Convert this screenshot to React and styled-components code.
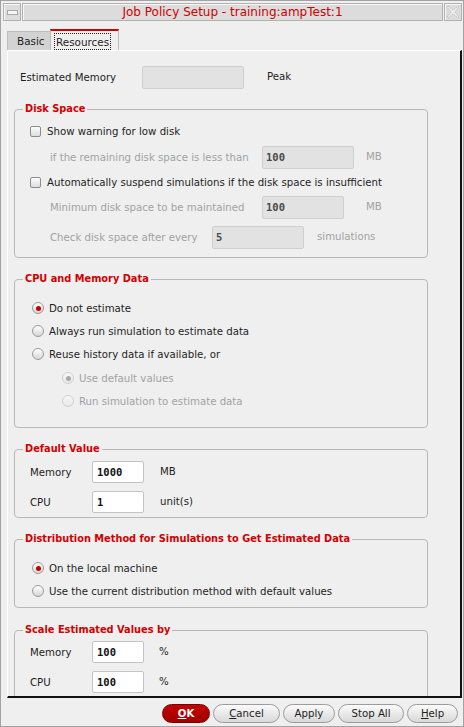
import React from "react";
import styled, { createGlobalStyle } from "styled-components";

const GlobalStyle = createGlobalStyle`
  body {
    margin: 0;
    background: #efefef;
    font-family: "DejaVu Sans", sans-serif;
  }
`;

function App() {
  return (
    <>
      <GlobalStyle />
      <Window>
        <TitleBar>
          <WinButton>
            <MinGlyph />
          </WinButton>
          <Title>Job Policy Setup - training:ampTest:1</Title>
          <WinButton>
            <svg width="14" height="14" viewBox="0 0 14 14">
              <path
                d="M2 1 L7 5 L12 1 L13 2 L9 7 L13 12 L12 13 L7 9 L2 13 L1 12 L5 7 L1 2 Z"
                fill="#ececec"
                stroke="#bdbdbd"
                strokeWidth="1"
                strokeDasharray="1.5 1"
              />
            </svg>
          </WinButton>
        </TitleBar>

        <Tabs>
          <Tab>Basic</Tab>
          <Tab $active>
            <Focus>Resources</Focus>
          </Tab>
        </Tabs>

        <Panel>
          <EstRow>
            <Label $w={122}>Estimated Memory</Label>
            <Field $w={102} $h={23} $off />
            <Unit $ml={23}>Peak</Unit>
          </EstRow>

          <Group $mt={13} $pb={8}>
            <Legend>Disk Space</Legend>
            <Row $mt={3} $pl={15}>
              <Check />
              <Text $ml={6}>Show warning for low disk</Text>
            </Row>
            <Row $mt={2} $pl={35}>
              <Label $w={212} $off>if the remaining disk space is less than</Label>
              <Field $w={92} $h={23} $off>100</Field>
              <Unit $ml={12} $off>MB</Unit>
            </Row>
            <Row $mt={1} $pl={15}>
              <Check />
              <Text $ml={6}>Automatically suspend simulations if the disk space is insufficient</Text>
            </Row>
            <Row $mt={1} $pl={35}>
              <Label $w={212} $off>Minimum disk space to be maintained</Label>
              <Field $w={82} $h={23} $off>100</Field>
              <Unit $ml={22} $off>MB</Unit>
            </Row>
            <Row $mt={6} $pl={35}>
              <Label $w={162} $off>Check disk space after every</Label>
              <Field $w={92} $h={23} $off>5</Field>
              <Unit $ml={13} $off>simulations</Unit>
            </Row>
          </Group>

          <Group $mt={14} $pb={15}>
            <Legend>CPU and Memory Data</Legend>
            <Row $mt={11} $h={22} $pl={17}>
              <Radio $on />
              <Text $ml={5}>Do not estimate</Text>
            </Row>
            <Row $mt={1} $h={22} $pl={17}>
              <Radio />
              <Text $ml={5}>Always run simulation to estimate data</Text>
            </Row>
            <Row $mt={1} $h={22} $pl={17}>
              <Radio />
              <Text $ml={5}>Reuse history data if available, or</Text>
            </Row>
            <Row $mt={2} $h={22} $pl={47}>
              <Radio $on $off />
              <Text $ml={5} $off>Use default values</Text>
            </Row>
            <Row $mt={1} $h={22} $pl={47}>
              <Radio $off />
              <Text $ml={5} $off>Run simulation to estimate data</Text>
            </Row>
          </Group>

          <Group $mt={14} $pb={3}>
            <Legend>Default Value</Legend>
            <Row $mt={4} $pl={15}>
              <Label $w={62}>Memory</Label>
              <Field $w={52} $h={22}>1000</Field>
              <Unit $ml={16}>MB</Unit>
            </Row>
            <Row $mt={6} $pl={15}>
              <Label $w={62}>CPU</Label>
              <Field $w={52} $h={22}>1</Field>
              <Unit $ml={16}>unit(s)</Unit>
            </Row>
          </Group>

          <Group $mt={14} $pb={5}>
            <Legend>Distribution Method for Simulations to Get Estimated Data</Legend>
            <Row $mt={11} $h={22} $pl={17}>
              <Radio $on />
              <Text $ml={5}>On the local machine</Text>
            </Row>
            <Row $mt={1} $h={22} $pl={17}>
              <Radio />
              <Text $ml={5}>Use the current distribution method with default values</Text>
            </Row>
          </Group>

          <Group $mt={15} $pb={20}>
            <Legend>Scale Estimated Values by</Legend>
            <Row $mt={3} $pl={15}>
              <Label $w={62}>Memory</Label>
              <Field $w={52} $h={22}>100</Field>
              <Unit $ml={15}>%</Unit>
            </Row>
            <Row $mt={6} $pl={15}>
              <Label $w={62}>CPU</Label>
              <Field $w={52} $h={22}>100</Field>
              <Unit $ml={15}>%</Unit>
            </Row>
          </Group>
        </Panel>

        <Footer>
          <Button $w={48} $primary>
            <u>O</u>K
          </Button>
          <Button $w={67}>
            <u>C</u>ancel
          </Button>
          <Button $w={52}>Apply</Button>
          <Button $w={66}>Stop All</Button>
          <Button $w={51}>
            <u>H</u>elp
          </Button>
        </Footer>
      </Window>
    </>
  );
}

const Window = styled.div`
  width: 464px;
  height: 727px;
  box-sizing: border-box;
  border: 1px solid #a3a3a3;
  padding: 2px 1px 0 2px;
  background: #efefef;
  display: flex;
  flex-direction: column;
  font-family: "DejaVu Sans", sans-serif;
  font-size: 10.2px;
  color: #1e1e1e;
  overflow: hidden;
`;

const TitleBar = styled.div`
  display: flex;
  gap: 1px;
  height: 18px;
  flex: none;
`;

const WinButton = styled.div`
  width: 18px;
  box-sizing: border-box;
  border: 1px solid #b2b2b2;
  box-shadow: inset 1px 1px 0 #f6f6f6;
  background: #dcdcdc;
  display: flex;
  align-items: center;
  justify-content: center;
`;

const MinGlyph = styled.span`
  width: 9px;
  height: 3px;
  border: 1px solid #a8a8a8;
  background: #f4f4f4;
`;

const Title = styled.div`
  flex: 1;
  box-sizing: border-box;
  border: 1px solid #b2b2b2;
  box-shadow: inset 1px 1px 0 #f6f6f6;
  background: #dcdcdc;
  color: #d00000;
  font-size: 12px;
  line-height: 16px;
  text-align: center;
`;

const Tabs = styled.div`
  display: flex;
  align-items: flex-end;
  height: 21px;
  margin: 8px 0 0 4px;
  flex: none;
`;

const Tab = styled.div`
  box-sizing: border-box;
  height: ${(p) => (p.$active ? 21 : 19)}px;
  width: ${(p) => (p.$active ? 69 : 44)}px;
  margin-left: ${(p) => (p.$active ? -1 : 0)}px;
  padding: ${(p) => (p.$active ? "1px 3px 0" : "0 0 0 9px")};
  border: 1px solid #bcbcbc;
  border-bottom: none;
  border-top: ${(p) => (p.$active ? "2px solid #cc0000" : "1px solid #bcbcbc")};
  background: ${(p) => (p.$active ? "#efefef" : "#d3d3d3")};
  display: flex;
  align-items: center;
  font-size: 10.4px;
`;

const Focus = styled.span`
  border: 1px dotted #222;
  padding: 2px 1px 1px;
  line-height: 12px;
`;

const Panel = styled.div`
  flex: none;
  height: 648px;
  margin-left: 4px;
  box-sizing: border-box;
  border-top: 1px solid #ffffff;
  border-left: 1px solid #ffffff;
  border-right: 2px solid #111111;
  border-bottom: 2px solid #111111;
  padding-left: 6px;
  overflow: hidden;
  display: flex;
  flex-direction: column;
`;

const EstRow = styled.div`
  display: flex;
  align-items: center;
  height: 24px;
  margin-top: 14px;
  padding-left: 6px;
  flex: none;
`;

const Group = styled.fieldset`
  flex: none;
  width: 414px;
  box-sizing: border-box;
  min-width: 0;
  margin: ${(p) => p.$mt}px 0 0 0;
  padding: 0 0 ${(p) => p.$pb}px 0;
  border: 1px solid #b8b8b8;
  border-radius: 4px;
  display: flex;
  flex-direction: column;
`;

const Legend = styled.legend`
  margin-left: 8px;
  padding: 0 2px;
  color: #d20000;
  font-weight: bold;
  font-size: 9.8px;
  line-height: 14px;
`;

const Row = styled.div`
  display: flex;
  align-items: center;
  height: ${(p) => p.$h || 24}px;
  margin-top: ${(p) => p.$mt}px;
  padding-left: ${(p) => p.$pl}px;
`;

const Label = styled.span`
  width: ${(p) => p.$w}px;
  flex: none;
  color: ${(p) => (p.$off ? "#a2a2a2" : "#1e1e1e")};
`;

const Text = styled.span`
  margin-left: ${(p) => p.$ml}px;
  color: ${(p) => (p.$off ? "#a2a2a2" : "#1e1e1e")};
  white-space: nowrap;
`;

const Unit = styled.span`
  margin-left: ${(p) => p.$ml}px;
  margin-top: -2px;
  color: ${(p) => (p.$off ? "#a2a2a2" : "#1e1e1e")};
`;

const Field = styled.div`
  flex: none;
  width: ${(p) => p.$w}px;
  height: ${(p) => p.$h}px;
  box-sizing: border-box;
  border: 1px solid ${(p) => (p.$off ? "#cfcfcf" : "#c4c4c4")};
  border-radius: 2px;
  background: ${(p) => (p.$off ? "#e2e2e2" : "#ffffff")};
  padding-left: ${(p) => (p.$off ? 3 : 4)}px;
  display: flex;
  align-items: center;
  font-family: "DejaVu Sans Mono", monospace;
  font-weight: bold;
  font-size: 10.5px;
  color: ${(p) => (p.$off ? "#4a4a4a" : "#111111")};
`;

const Check = styled.span`
  flex: none;
  width: 11px;
  height: 11px;
  box-sizing: border-box;
  border: 1px solid #8c8c8c;
  border-radius: 2px;
  background: linear-gradient(#fdfdfd, #dcdcdc);
`;

const Radio = styled.span`
  flex: none;
  width: 12px;
  height: 12px;
  box-sizing: border-box;
  border: 1px solid ${(p) => (p.$off ? "#d0d0d0" : "#9a9a9a")};
  border-radius: 50%;
  background: ${(p) =>
    p.$off ? "linear-gradient(#f8f8f8, #e8e8e8)" : "linear-gradient(#ffffff, #d6d6d6)"};
  display: flex;
  align-items: center;
  justify-content: center;

  &::after {
    content: "";
    display: ${(p) => (p.$on ? "block" : "none")};
    width: 5px;
    height: 5px;
    border-radius: 50%;
    background: ${(p) => (p.$off ? "#a8a8a8" : "#c80000")};
  }
`;

const Footer = styled.div`
  flex: none;
  height: 28px;
  box-sizing: border-box;
  padding: 6px 4px 0 0;
  display: flex;
  justify-content: flex-end;
  align-items: flex-start;
  gap: 3px;
`;

const Button = styled.div`
  width: ${(p) => p.$w}px;
  height: 19px;
  box-sizing: border-box;
  border: 1px solid ${(p) => (p.$primary ? "#7a0000" : "#9c9c9c")};
  border-radius: 10px;
  background: ${(p) =>
    p.$primary ? "linear-gradient(#c40000, #a20000)" : "linear-gradient(#fbfbfb, #d8d8d8)"};
  color: ${(p) => (p.$primary ? "#ffffff" : "#1e1e1e")};
  font-weight: ${(p) => (p.$primary ? "bold" : "normal")};
  font-size: 10.2px;
  display: flex;
  align-items: center;
  justify-content: center;

  u {
    text-underline-offset: 1px;
  }
`;

export default App;
